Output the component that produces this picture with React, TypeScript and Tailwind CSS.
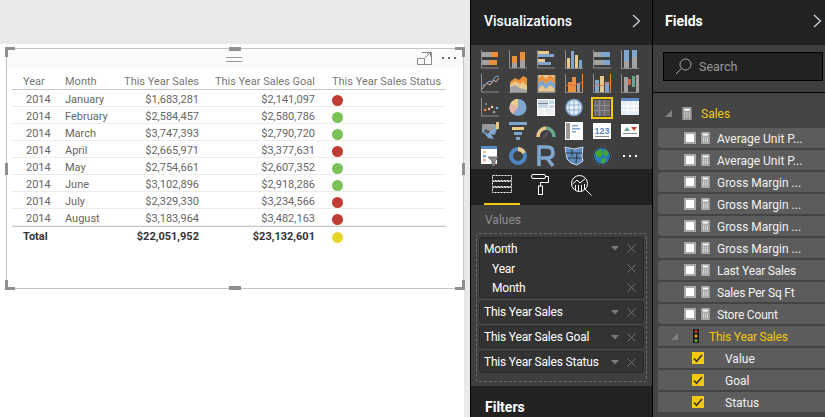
import React from "react";

const B = "#7fa6cf", O = "#e8913a", T = "#e9c98d", G = "#a3a3a3", L = "#8c8c8c", P = "#e8b5a5";
const R = (x: number, y: number, w: number, h: number, f: string) => <rect x={x} y={y} width={w} height={h} fill={f} />;
const axisL = <path d="M.5 0V18H18" stroke={L} fill="none" />;
const axisB = <path d="M0 18.5H18" stroke={L} fill="none" />;
const line = (d: string, c: string) => <path d={d} stroke={c} fill="none" strokeWidth="1" />;

const icons: React.ReactNode[] = [
  <>{axisL}{R(1, 2, 9, 5, G)}{R(10, 2, 7, 5, O)}{R(1, 10, 7, 5, G)}{R(8, 10, 8, 5, O)}</>,
  <>{axisL}{R(3, 6, 5, 7, O)}{R(3, 13, 5, 5, G)}{R(11, 2, 5, 8, O)}{R(11, 10, 5, 8, G)}</>,
  <>{axisL}{R(1, 1, 11, 3, T)}{R(1, 4, 16, 3, B)}{R(1, 9, 7, 3, T)}{R(1, 12, 13, 3, B)}</>,
  <>{axisB}{R(0, 0, 1, 18, L)}{R(2, 8, 3, 10, T)}{R(6, 1, 3, 17, B)}{R(10, 5, 3, 13, T)}{R(14, 10, 3, 8, B)}</>,
  <>{axisL}{R(1, 2, 7, 5, G)}{R(8, 2, 9, 5, B)}{R(1, 10, 9, 5, G)}{R(10, 10, 7, 5, B)}</>,
  <>{axisB}{R(0, 0, 1, 18, L)}{R(3, 0, 5, 11, B)}{R(3, 11, 5, 7, G)}{R(11, 0, 5, 7, B)}{R(11, 7, 5, 11, G)}</>,
  <>{axisL}{line("M1 15L6 9 9 11 13 6 15 8 18 4", P)}{line("M1 12L5 10 8 7 11 8 14 3 18 2", B)}</>,
  <>{axisB}<path d="M1 8L6 4 10 6 14 2 18 4V18H1Z" fill={O} /><path d="M1 11L6 7 11 10 14 8 18 12V18H1Z" fill={T} /><path d="M1 13L6 11 11 14 18 16V18H1Z" fill={G} /></>,
  <>{axisB}<path d="M1 1V18H18V1" fill={T} stroke={L} /><path d="M1 5L5 1 9 5 13 1 18 5V10L13 6 9 10 5 6 1 10Z" fill={O} /><path d="M1 10L5 6 9 10 13 6 18 10V15L13 11 9 15 5 11 1 15Z" fill={B} /></>,
  <>{axisB}{R(0, 0, 1, 18, L)}{R(3, 8, 4, 10, O)}{R(7, 3, 4, 15, O)}{R(12, 9, 3, 9, G)}{R(17, 0, 1, 18, O)}{line("M0 13L4 10 8 12 12 10 18 8", "#e06a50")}</>,
  <>{axisB}{R(0, 0, 1, 18, L)}{R(2, 6, 4, 12, B)}{R(7, 2, 4, 16, T)}{R(12, 8, 4, 10, B)}{R(17, 0, 1, 18, O)}{line("M0 13L4 10 8 12 12 10 18 8", "#e06a50")}</>,
  <>{axisB}{R(0, 0, 1, 18, L)}{R(3, 3, 4, 15, G)}{R(7, 5, 3, 6, "#d9614a")}{R(11, 2, 3, 11, "#6aa68c")}{R(15, 1, 3, 17, G)}</>,
  <>{axisL}<circle cx="5" cy="6" r="1" fill={B} /><circle cx="4" cy="12" r="1.3" fill={O} /><circle cx="8" cy="11" r="1.3" fill={P} /><circle cx="11" cy="9" r="1.3" fill={T} /><circle cx="13" cy="14" r="1.3" fill={G} /><circle cx="16" cy="10" r="1.3" fill={B} /></>,
  <><circle cx="9" cy="9.5" r="8.5" fill={B} /><path d="M9 9.5V1A8.5 8.5 0 0 0 1.3 6Z" fill={T} /><path d="M9 9.5L1.3 6A8.5 8.5 0 0 0 3.5 16Z" fill={P} /></>,
  <>{R(0, 1, 18, 17, "#fff")}{R(1, 2, 10, 8, "#c7d7ea")}{R(12, 2, 5, 4, "#c7d7ea")}{R(12, 7, 5, 3, "#c7d7ea")}{R(1, 11, 6, 6, "#eee")}{R(8, 11, 9, 6, "#eee")}{R(1, 5, 10, 1, "#7d8794")}</>,
  <><circle cx="9" cy="9.5" r="8" fill="#e8f0f6" stroke={B} strokeWidth="1.5" /><path d="M1 7H17M1 12H17M9 1.5V17.5M5 3Q3 9.5 5 16M13 3Q15 9.5 13 16" stroke={B} strokeWidth=".8" fill="none" /></>,
  <>{R(-2, -1, 22, 22, "#f2c811")}{R(0, 1, 18, 18, "#3f3f3f")}{R(1, 2, 16, 16, "#6e6e6e")}{line("M6.5 2V18M11.5 2V18M1 7.5H17M1 12.5H17", "#8e8e8e")}</>,
  <>{R(0, 0, 18, 17, "#e8eef5")}{R(0, 0, 18, 3, "#5d8ac0")}{line("M6.5 3V17M12.5 3V17M0 8H18M0 12.5H18", "#fff")}</>,
  <><path d="M1 4L12 2 15 3 16 0 17 6 15 9 14 13 10 12 13 17 7 16 4 12 1 10Z" fill={B} /><path d="M1 2H14V6L10 9 2 8Z" fill="#999" /><path d="M15 0H18V7H15Z" fill={T} /><path d="M4 7L9 9 7 12 3 10Z" fill="#555" /></>,
  <>{R(0, 0, 18, 3, B)}{R(3, 5, 12, 3, T)}{R(5, 10, 8, 3, B)}{R(7, 15, 4, 3, B)}</>,
  <><path d="M1 16A8.5 8.5 0 0 1 9 7" stroke={T} strokeWidth="3.5" fill="none" transform="translate(0 -1)" /><path d="M9 6A8.5 8.5 0 0 1 17 15" stroke="#6aa68c" strokeWidth="3.5" fill="none" /><path d="M6 16L11 10" stroke="#555" strokeWidth="2" /></>,
  <>{R(0, 0, 18, 18, "#fff")}{R(1, 1, 4, 16, "#999")}{R(7, 3, 6, 1.5, B)}{R(7, 6, 8, 1.5, B)}{R(7, 9, 4, 1.5, B)}</>,
  <>{R(0, 1, 18, 16, "#fff")}<text x="9" y="11.5" fontSize="9" fontWeight="700" textAnchor="middle" fill="#5d8ac0" fontFamily="Liberation Sans">123</text>{R(2, 14, 14, 1, "#888")}</>,
  <>{R(0, 2, 18, 13, "#fff")}<path d="M3 9L6 5 9 9Z" fill="#6aa68c" /><path d="M10 5H16L13 9Z" fill="#c9442f" />{R(2, 11, 14, 1, "#888")}</>,
  <>{R(0, 0, 16, 18, "#fff")}{R(0, 0, 16, 3, "#5d8ac0")}{R(2, 5, 3, 2.5, T)}{R(2, 9, 3, 2.5, B)}{R(2, 13, 3, 2.5, P)}<path d="M7 11H18L14 15V20H11V15Z" fill="#8c8c8c" stroke="#3f3f3f" strokeWidth=".6" /></>,
  <><circle cx="9" cy="10" r="7" fill="none" stroke="#4d86c0" strokeWidth="4" /><path d="M9 3A7 7 0 0 1 15 7" stroke={T} strokeWidth="4" fill="none" /></>,
  <><path d="M2 20V1H10Q16 1 16 6.5T10 12H4M10 12L16 20" stroke={B} strokeWidth="3.6" fill="none" /></>,
  <><path d="M0 1L9 3 18 1 17 10 18 15 12 19 6 17 2 13Z" fill="#5d8ac0" stroke="#ccd8e6" /><path d="M1 7H17M7 3V10M12 7L11 17M3 12H16" stroke="#222" strokeWidth=".8" /></>,
  <><circle cx="9" cy="10" r="9" fill="#222" stroke="#777" strokeDasharray="1 1" /><circle cx="9" cy="10" r="8" fill="#2379b9" /><path d="M2 6L8 3 10 8 7 12 3 10ZM12 3L16 7 13 11 10 7ZM8 13L13 12 12 17 8 17Z" fill="#4aa335" /></>,
  <>{R(2, 9, 2, 2, "#fff")}{R(8, 9, 2, 2, "#fff")}{R(14, 9, 2, 2, "#fff")}</>,
];

const rows = [
  ["January", "$1,683,281", "$2,141,097", 0], ["February", "$2,584,457", "$2,580,786", 1], ["March", "$3,747,393", "$2,790,720", 1], ["April", "$2,665,971", "$3,377,631", 0],
  ["May", "$2,754,661", "$2,607,352", 1], ["June", "$3,102,896", "$2,918,286", 1], ["July", "$2,329,330", "$3,234,566", 0], ["August", "$3,183,964", "$3,482,163", 0],
] as const;

const Chevron = () => <svg width="9" height="14" viewBox="0 0 9 14" fill="none" stroke="#cfd8e0" strokeWidth="1.2"><path d="M1 1l6.5 6L1 13" /></svg>;
const Caret = () => <svg width="8" height="5" viewBox="0 0 8 5"><path d="M0 0h8L4 4.5z" fill="#7a7a7a" /></svg>;
const Close = () => <svg width="9" height="9" viewBox="0 0 9 9" stroke="#7a7a7a" strokeWidth=".9"><path d="M.5.5l8 8M8.5.5l-8 8" /></svg>;
const Calc = ({ w = 10, h = 14, c = "#a9a9a9" }: { w?: number; h?: number; c?: string }) => (
  <svg width={w} height={h} viewBox="0 0 10 14"><rect width="10" height="14" fill={c} /><rect x="2" y="2" width="6" height="2" fill="#fff" /><path d="M2 6h1v1H2zM4.5 6h1v1h-1zM7 6h1v1H7zM2 8h1v1H2zM4.5 8h1v1h-1zM7 8h1v1H7zM2 10h1v1H2zM4.5 10h1v1h-1zM7 10h1v1H7z" fill="#fff" /></svg>
);
const Check = () => (
  <span className="flex h-3 w-3 items-center justify-center bg-[#f2c811]">
    <svg width="10" height="9" viewBox="0 0 10 9" fill="none" stroke="#333" strokeWidth="1.6"><path d="M1 4.5l2.6 2.8L9 1" /></svg>
  </span>
);
const Dot = ({ c }: { c: string }) => <span className={`mt-[4px] block h-[11px] w-[11px] rounded-full ${c}`} />;

function Handle({ className }: { className: string }) {
  return <span className={`absolute bg-[#8f8f8f] ${className}`} />;
}
function Corner({ className, d }: { className: string; d: string }) {
  return <svg className={`absolute ${className}`} width="10" height="10" viewBox="0 0 10 10"><path d={d} fill="#8f8f8f" /></svg>;
}

const panelText = "text-[12px] tracking-[-0.2px] text-white";

function Well({ label }: { label: string }) {
  return (
    <div className={`flex h-[20px] items-center justify-between whitespace-nowrap pl-[4px] pr-[7px] ${panelText}`}>
      <span>{label}</span>
      <span className="flex items-center gap-[8px]"><Caret /><Close /></span>
    </div>
  );
}

function Field({ label }: { label: string }) {
  return (
    <div className="flex h-5 items-center rounded-l-[3px] bg-[#5c5c5c] pl-[26px] text-[12px] text-[#f2f2f2]">
      <span className="box-border h-3 w-3 border-2 border-[#a9a9a9] bg-white" />
      <span className="ml-[5px] flex"><Calc w={9} h={12} /></span>
      <span className={`ml-[7px] whitespace-nowrap pt-[1px] ${label.endsWith("...") ? "" : "tracking-[-0.2px]"}`}>{label}</span>
    </div>
  );
}

function SubField({ label }: { label: string }) {
  return (
    <div className="flex h-[22px] items-center border-t-2 border-[#444] bg-[#5c5c5c] pl-[34px] text-[12px] text-[#f2f2f2]">
      <Check />
      <span className="ml-[21px] pt-[1px]">{label}</span>
    </div>
  );
}

export default function App() {
  return (
    <div className="flex h-[417px] w-[825px] overflow-hidden bg-[#e9e9e9] font-['Roboto',sans-serif]">
      {/* canvas */}
      <div className="w-[464px]">
        <div className="h-[44px]" />
        <div className="h-[373px] bg-white pl-[6px] pt-[4px]">
          <div className="relative h-[241px] w-[458px] border border-[#c4c4c4] bg-white">
            <div className="flex h-[19px] items-center justify-end gap-[10px] bg-[#fafafa] pr-[6px]">
              <svg className="absolute left-[219px] top-[8px]" width="16" height="5" viewBox="0 0 16 5" stroke="#9a9a9a"><path d="M0 .5h16M0 4.5h16" /></svg>
              <svg width="15" height="13" viewBox="0 0 15 13" fill="none" stroke="#8a8a8a"><path d="M5 .5H14.5V12.5H.5V6.5H7.5V12.5M8 6L13 1M10 1h3.5v3.5" /></svg>
              <svg width="15" height="3" viewBox="0 0 15 3" fill="#6c6c6c"><rect width="2" height="2" /><rect x="6" width="2" height="2" /><rect x="12" width="2" height="2" /></svg>
            </div>
            <div className="ml-[5px] mt-[4px] w-[434px] text-[11px] leading-[17px] text-[#666]">
              <div className="grid h-[18px] grid-cols-[53px_45px_89px_116px_1fr] border-b border-[#c8c8c8] text-[#777]">
                <span className="pl-[11px] pt-[1px]">Year</span>
                <span className="pt-[1px]">Month</span>
                <span className="whitespace-nowrap pt-[1px] text-right">This Year Sales</span>
                <span className="whitespace-nowrap pt-[1px] text-right">This Year Sales Goal</span>
                <span className="whitespace-nowrap pl-[17px] pt-[1px]">This Year Sales Status</span>
              </div>
              {rows.map((r) => (
                <div key={r[0]} className="grid h-[17px] grid-cols-[53px_45px_89px_116px_1fr] border-b border-[#ececec] pt-[1px]">
                  <span className="pl-[14px]">2014</span>
                  <span className="whitespace-nowrap">{r[0]}</span>
                  <span className="text-right">{r[1]}</span>
                  <span className="text-right">{r[2]}</span>
                  <span className="pl-[17px]"><Dot c={r[3] ? "bg-[#78c258]" : "bg-[#bf3d33]"} /></span>
                </div>
              ))}
              <div className="grid h-[18px] grid-cols-[53px_45px_89px_116px_1fr] border-t border-[#c8c8c8] pt-[1px] font-bold text-[#333]">
                <span className="pl-[11px]">Total</span>
                <span />
                <span className="text-right">$22,051,952</span>
                <span className="text-right">$23,132,601</span>
                <span className="pl-[17px]"><Dot c="bg-[#e8d528]" /></span>
              </div>
            </div>
            <Corner className="-left-[2px] -top-[2px]" d="M0 0h10v3H3v7H0z" />
            <Corner className="-right-[2px] -top-[2px]" d="M0 0h10v10H7V3H0z" />
            <Corner className="-bottom-[2px] -left-[2px]" d="M0 0h3v7h7v3H0z" />
            <Corner className="-bottom-[2px] -right-[2px]" d="M7 0h3v10H0V7h7z" />
            <Handle className="-top-[2px] left-[222px] h-[4px] w-[12px]" />
            <Handle className="-bottom-[2px] left-[222px] h-[4px] w-[12px]" />
            <Handle className="-left-[2px] top-[114px] h-[12px] w-[3px]" />
            <Handle className="-right-[2px] top-[114px] h-[12px] w-[3px]" />
          </div>
        </div>
      </div>
      <div className="w-[6px]" />
      {/* visualizations */}
      <div className="flex w-[183px] flex-col border-x border-black bg-[#222]">
        <div className="flex h-[45px] shrink-0 items-center justify-between pb-[3px] pl-[13px] pr-[11px] text-[14px] font-medium text-white">
          <span>Visualizations</span><Chevron />
        </div>
        <div className="grid h-[124px] shrink-0 grid-cols-[repeat(6,28px)] grid-rows-[repeat(5,24px)] bg-[#3f3f3f] pl-[10px] pt-[5px]">
          {icons.map((ic, i) => (
            <svg key={i} width="18" height="20" viewBox="0 0 18 20" overflow="visible">{ic}</svg>
          ))}
        </div>
        <div className="flex h-[36px] shrink-0 gap-[11px] pl-[13px]">
          <div className="flex h-[36px] w-[36px] items-center justify-center border-b-2 border-[#f2c811] pb-[4px]">
            <svg width="20" height="20" viewBox="0 0 20 20" fill="none" stroke="#fff" strokeDasharray="2 1"><path d="M.5 1.5h19v5h-19zM.5 7.5h19v5h-19zM.5 13.5h19v5h-19z" /></svg>
          </div>
          <div className="flex h-[36px] w-[20px] items-center pb-[5px]">
            <svg width="18" height="21" viewBox="0 0 18 21" fill="none" stroke="#fff"><rect x=".5" y=".5" width="14" height="4" rx="1.5" /><path d="M14.5 2.5H17.5V8.5H9.5V12" /><rect x="7.5" y="12" width="4" height="8.5" /></svg>
          </div>
          <div className="flex h-[36px] items-center pb-[4px] pl-[9px]">
            <svg width="21" height="21" viewBox="0 0 21 21" fill="none" stroke="#fff"><circle cx="8.5" cy="8.5" r="8" /><path d="M14 14l6.5 6.5M1.5 9L6 5l3 3 6-5M4.5 10v5M7.5 10v6.5M10.5 10v6.5M13.5 9v5" /></svg>
          </div>
        </div>
        <div className="flex h-[181px] shrink-0 flex-col bg-[#3f3f3f] px-[5px]">
          <div className="h-[28px] shrink-0 pl-[9px] pt-[6px] text-[12px] leading-[18px] text-[#8f8f8f]">Values</div>
          <div className="h-[149px] shrink-0 rounded-[3px] border border-dashed border-[#6a6a6a] px-[2px] pt-[3px]">
            <div className="rounded-[3px] border border-[#2a2a2a] bg-[#333]">
              <div className={`flex h-[21px] items-center justify-between pl-[4px] pr-[7px] ${panelText}`}><span className="pt-[1px]">Month</span><span className="flex items-center gap-[8px]"><Caret /><Close /></span></div>
              <div className={`flex h-[19px] items-center justify-between pl-[12px] pr-[7px] ${panelText}`}><span className="pt-[1px]">Year</span><Close /></div>
              <div className={`flex h-[19px] items-center justify-between pl-[12px] pr-[7px] ${panelText}`}><span className="pt-[1px]">Month</span><Close /></div>
            </div>
            {["This Year Sales", "This Year Sales Goal", "This Year Sales Status"].map((t) => (
              <div key={t} className="mt-[3px] rounded-[3px] border border-[#2a2a2a] bg-[#333]"><Well label={t} /></div>
            ))}
          </div>
        </div>
        <div className="h-[31px] shrink-0 pl-[14px] pt-[11px] text-[14px] font-bold leading-[20px] text-white">Filters</div>
      </div>
      {/* fields */}
      <div className="flex w-[172px] flex-col bg-[#222]">
        <div className="flex h-[45px] shrink-0 items-center justify-between pb-[3px] pl-[12px] pr-[3px] text-[14px] font-bold text-white">
          <span>Fields</span><Chevron />
        </div>
        <div className="h-[48px] shrink-0 border-b border-black bg-[#3f3f3f] pl-[10px] pt-[7px]">
          <div className="flex h-[29px] w-[160px] items-center border border-black bg-[#222] pl-[11px] text-[12.5px] text-[#9a9a9a]">
            <svg width="17" height="17" viewBox="0 0 17 17" fill="none" stroke="#a8a8a8"><circle cx="10.5" cy="6.5" r="5.5" /><path d="M6.5 10.5L1 16" /></svg>
            <span className="ml-[7px] pt-[2px]">Search</span>
          </div>
        </div>
        <div className="flex-1 bg-[#444] pl-[5px]">
          <div className="flex h-[35px] items-center pt-[6px] text-[12px] text-[#f2c811]">
            <svg className="ml-[7px]" width="7" height="7" viewBox="0 0 7 7"><path d="M7 0v7H0z" fill="#808080" /></svg>
            <span className="ml-[10px] flex"><Calc w={10} h={13} c="#9b9b9b" /></span>
            <span className="ml-[9px] pt-[1px]">Sales</span>
          </div>
          <div className="flex flex-col gap-[2px]">
            {["Average Unit P...", "Average Unit P...", "Gross Margin ...", "Gross Margin ...", "Gross Margin ...", "Gross Margin ...", "Last Year Sales", "Sales Per Sq Ft", "Store Count"].map((l, i) => (
              <Field key={i} label={l} />
            ))}
          </div>
          <div className="mt-[2px] rounded-l-[3px] bg-[#5c5c5c]">
            <div className="flex h-[20px] items-center text-[12px] tracking-[-0.2px] text-[#f2c811]">
              <svg className="ml-[13px]" width="7" height="7" viewBox="0 0 7 7"><path d="M7 0v7H0z" fill="#808080" /></svg>
              <svg className="ml-[15px]" width="6" height="14" viewBox="0 0 6 14"><rect width="6" height="14" fill="#1a1a1a" /><circle cx="3" cy="2.5" r="1.5" fill="#d93a2b" /><circle cx="3" cy="7" r="1.5" fill="#f2b011" /><circle cx="3" cy="11.5" r="1.5" fill="#5fbf2f" /></svg>
              <span className="ml-[10px] pt-[1px]">This Year Sales</span>
            </div>
            {["Value", "Goal", "Status"].map((l) => <SubField key={l} label={l} />)}
          </div>
        </div>
      </div>
    </div>
  );
}
